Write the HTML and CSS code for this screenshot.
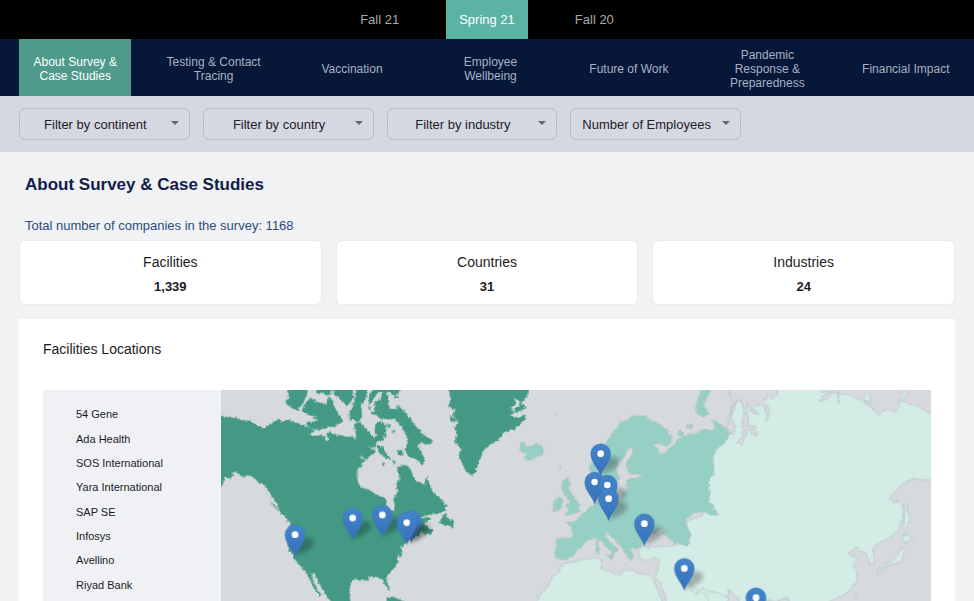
FILE: index.html
```html
<!DOCTYPE html>
<html lang="en">

<head>
    <meta charset="UTF-8">
    <meta name="viewport" content="width=device-width, initial-scale=1.0">
    <title>About Survey &amp; Case Studies</title>
    <link rel="stylesheet" href="styles.css">
</head>

<body>
    <nav class="seasons" aria-label="Survey period">
        <a href="#">Fall 21</a>
        <a href="#" class="active">Spring 21</a>
        <a href="#">Fall 20</a>
    </nav>
    <nav class="topics" aria-label="Topics">
        <a href="#" class="active">About Survey &amp; Case Studies</a>
        <a href="#">Testing &amp; Contact Tracing</a>
        <a href="#">Vaccination</a>
        <a href="#">Employee Wellbeing</a>
        <a href="#">Future of Work</a>
        <a href="#">Pandemic Response &amp; Preparedness</a>
        <a href="#">Financial Impact</a>
    </nav>
    <form class="filters">
        <div class="filter-row">
            <label class="filter"><select aria-label="Continent"><option>Filter by continent</option></select></label>
            <label class="filter"><select aria-label="Country"><option>Filter by country</option></select></label>
            <label class="filter"><select aria-label="Industry"><option>Filter by industry</option></select></label>
            <label class="filter"><select aria-label="Employees"><option>Number of Employees</option></select></label>
        </div>
    </form>

    <main>
        <h1>About Survey &amp; Case Studies</h1>
        <p class="total">Total number of companies in the survey: 1168</p>
        <div class="cards">
            <div class="card"><h2>Facilities</h2><strong>1,339</strong></div>
            <div class="card"><h2>Countries</h2><strong>31</strong></div>
            <div class="card"><h2>Industries</h2><strong>24</strong></div>
        </div>

        <section class="panel">
            <h2>Facilities Locations</h2>
            <div class="locations">
                <ul class="companies">
                    <li>54 Gene</li>
                    <li>Ada Health</li>
                    <li>SOS International</li>
                    <li>Yara International</li>
                    <li>SAP SE</li>
                    <li>Infosys</li>
                    <li>Avellino</li>
                    <li>Riyad Bank</li>
                </ul>
                <svg class="map" viewBox="0 0 2130 633" role="img" aria-label="Map of facilities">
                    <defs>
                        <linearGradient id="blue" x1="0" y1="0" x2="0" y2="1">
                            <stop offset="0" stop-color="#4585c8" />
                            <stop offset="1" stop-color="#3570bd" />
                        </linearGradient>
                        <filter id="soft" x="-50%" y="-50%" width="200%" height="200%">
                            <feGaussianBlur stdDeviation="6" />
                        </filter>
                        <!-- roughens the coastlines -->
                        <filter id="coast" filterUnits="userSpaceOnUse" x="-20" y="-20" width="2200" height="700" color-interpolation-filters="sRGB">
                            <feTurbulence type="fractalNoise" baseFrequency="0.12" numOctaves="2" seed="4" />
                            <feDisplacementMap in="SourceGraphic" scale="12" xChannelSelector="R" yChannelSelector="G" />
                        </filter>
                        <!-- the tip of the pin is at 0,0 -->
                        <g id="pin">
                            <path class="shade" d="M0 -2 L14 -42 C24 -66 58 -60 56 -40 C52 -22 22 -10 0 -2Z" />
                            <path class="drop" d="M0 0 C-5 -20 -30 -40 -30 -66 A30 30 0 0 1 30 -66 C30 -40 5 -20 0 0Z" />
                        </g>
                        <g id="marker">
                            <use href="#pin" />
                            <circle cy="-66" r="10" fill="#fff" />
                        </g>
                    </defs>

                    <g filter="url(#coast)">
                        <g class="america" transform="translate(-3 -6)">
                            <path d="M-20 76 L3 80 20 87 45 90 65 96 90 98 110 110 130 123 142 114 160 102 178 92 186 102 205 94 222 102 240 108 262 116 276 122 284 130 268 138 276 144 304 140 314 146 322 164 326 150 318 138 330 130 346 140 366 142 388 146 400 144 402 158 408 148 406 132 402 118 408 104 420 104 436 118 446 130 460 150 470 142 464 128 466 108 478 100 492 106 500 118 496 144 486 160 472 158 466 176 456 180 440 174 466 188 462 198 446 206 440 218 428 206 416 204 434 216 424 232 412 246 410 266 416 288 430 300 448 306 464 318 482 326 497 328 500 350 510 368 522 372 524 350 520 332 534 308 528 292 540 270 528 240 534 234 556 230 570 240 578 262 588 280 600 284 614 290 620 266 628 284 634 302 646 320 664 334 680 352 676 366 656 378 626 380 606 384 592 394 608 392 622 386 634 392 622 398 612 402 616 410 626 418 640 430 632 440 614 438 604 428 598 440 582 448 566 456 552 468 540 484 548 490 542 508 534 500 530 514 534 522 524 540 512 550 500 566 500 582 510 602 504 608 494 590 486 574 468 568 444 566 448 578 426 576 402 574 392 586 388 610 392 645 336 645 322 626 308 606 296 584 284 560 274 555 280 580 292 602 306 622 298 622 278 594 262 560 252 544 232 526 222 508 206 484 200 450 208 420 212 404 198 398 186 380 176 368 158 354 150 336 138 318 134 296 118 286 102 268 84 262 64 266 48 252 34 254 44 262 28 272 14 266 10 286 3 300 -20 310Z" />
                            <path d="M200 -10 L266 -10 260 24 248 46 234 68 212 58 196 46 206 26Z" />
                            <path d="M244 70 L254 48 272 28 286 40 304 44 318 50 328 24 338 38 344 58 356 78 368 96 366 106 350 108 346 118 332 116 314 122 292 128 270 120 256 106 296 96 276 90 290 86 262 80Z" />
                            <path d="M284 -10 H334 L336 14 322 24 308 12 292 20Z" />
                            <path d="M338 -10 H396 L400 26 392 44 380 54 366 38 354 28 342 18Z" />
                            <path d="M386 74 L398 60 404 36 408 -10 H442 L440 26 424 50 426 86 416 104 402 94 388 98Z" />
                            <path d="M448 20 L470 -10 H540 V10 L526 22 538 30 514 30 504 50 510 62 534 64 530 50 550 66 562 80 578 102 592 120 610 140 640 160 626 170 602 164 594 170 606 194 616 218 604 230 586 212 562 204 554 184 564 162 554 132 540 110 526 96 500 94 478 92 474 82 454 78 446 56Z" />
                            <path class="gap" d="M490 10 L478 34 464 42 464 72 454 72 448 50 474 14Z M508 40 L524 26 510 10 500 14Z" />
                            <path d="M470 170 L486 176 498 194 514 214 494 208 476 192Z M500 106 L514 112 504 122Z M486 222 L496 226 488 234Z M512 130 L526 126 524 138Z" />
                            <path d="M528 188 L546 186 552 200 534 204Z M516 216 L528 220 520 232Z M658 404 L670 380 680 376 682 388 698 398 702 420 688 412 676 414Z" />
                            <path d="M500 628 L530 630 560 645 H500Z" />
                            <path d="M682 -10 H928 L920 28 904 44 918 60 908 72 918 92 902 108 884 124 862 130 848 138 842 150 812 170 794 184 784 204 774 228 768 252 756 264 738 250 724 224 716 204 722 184 704 162 712 138 702 118 716 104 698 82 706 66 686 56 692 30Z" />
                            <path class="gap" d="M882 30 L900 40 896 58 872 66 890 74 914 62 916 76 896 90 870 82 888 68 872 58 890 50Z M174 376 L188 380 202 396 196 400Z M120 284 L134 290 150 318 170 346 178 366 160 350 142 326 134 306Z" />
                            <path d="M690 84 L710 94 702 106 690 98Z" />
                        </g>

                        <g class="asia" transform="translate(957 -6)">
                            <path d="M606 -10 L604 22 590 40 580 70 568 96 582 122 572 136 560 150 510 200 490 380 440 400 440 470 420 468 396 474 360 474 330 480 308 476 296 486 300 500 294 510 318 518 340 510 358 514 352 548 346 566 364 592 382 645 H580 L560 625 528 612 506 612 492 600 474 608 460 596 448 574 440 570 452 600 464 618 484 610 500 620 508 645 H860 L892 630 914 620 934 602 950 578 950 554 938 530 954 508 934 504 924 496 952 478 958 490 976 492 984 514 990 530 1004 526 998 490 1006 474 1022 460 1044 454 1066 436 1082 410 1092 370 1084 348 1070 338 1056 344 1050 328 1076 300 1098 280 1122 272 1150 276 1190 278 V82 L1162 72 1146 62 1132 52 1112 50 1096 42 1080 36 1080 56 1064 72 1042 64 1030 66 1016 82 1002 68 990 52 976 46 968 38 946 30 924 20 896 16 870 10 846 14 840 -10Z" />
                            <path class="gap" d="M560 -10 H716 L712 22 692 30 682 24 672 38 688 62 688 88 680 98 680 76 670 54 652 50 634 58 654 78 636 74 630 60 622 44 620 70 626 96 624 112 646 114 652 144 634 136 636 122 620 130 616 148 606 170 588 164 604 152 610 130 606 100 612 72 606 40 590 36 576 60 574 90 586 116 582 140 560 130 566 90 580 50Z" />
                            <path class="gap" d="M838 40 L852 22 878 10 864 34Z M895 8 L897 46 893 20Z M968 24 L980 18 994 48 982 50Z M710 640 L742 628 748 645Z M564 606 L592 628 600 645 H564Z" />
                            <path d="M966 24 L982 16 990 24 990 40 976 38Z M1082 12 L1096 10 1104 24 1090 26Z" />
                            <path d="M1094 346 L1102 352 1104 378 1112 396 1102 408 1102 430 1094 440 1092 410Z M1088 444 L1098 440 1120 450 1102 464 1088 466Z M1086 474 L1092 490 1086 518 1066 528 1048 530 1022 542 1018 534 1050 522 1070 504 1080 488Z M1010 542 L1022 546 1014 560Z M1028 538 L1044 532 1034 546Z M946 612 L954 616 946 630Z" />
                            <path d="M-14 645 L0 620 22 600 34 572 52 556 70 526 84 524 108 520 140 512 182 510 186 524 182 540 204 548 226 560 242 562 250 546 276 546 300 558 326 560 340 572 350 600 370 645Z" />
                        </g>

                        <g class="europe" transform="translate(957 -6)">
                            <path d="M146 244 L148 232 176 212 196 168 212 144 230 118 242 104 262 96 278 82 300 84 318 84 328 96 348 102 370 118 390 136 396 158 380 174 356 166 340 168 352 180 356 198 372 196 386 184 400 172 410 156 428 150 412 138 418 126 430 134 432 148 448 136 466 138 484 126 510 126 526 124 516 98 534 104 550 116 566 126 566 146 546 172 528 186 520 210 522 256 508 274 506 300 512 316 502 342 520 350 524 366 534 380 510 380 496 372 468 374 446 384 436 396 440 414 452 440 448 466 440 476 420 466 398 462 384 446 364 436 370 422 354 426 344 438 326 440 318 458 306 474 290 482 272 480 270 490 284 502 272 516 256 496 246 478 228 462 210 442 200 432 196 446 212 466 236 486 226 490 216 504 212 490 196 474 180 456 160 452 140 458 130 472 110 488 98 506 70 516 46 508 48 484 48 454 72 448 96 452 98 430 90 414 78 402 104 400 120 384 140 368 158 350 170 344 166 318 182 304 190 340 214 346 242 340 248 316 264 300 256 290 268 272 292 270 312 260 288 258 266 258 258 226 270 206 284 186 270 178 258 190 250 212 234 228 228 250 240 266 228 300 214 314 200 300 192 266 164 262Z" />
                            <path d="M68 276 L84 270 92 288 86 302 100 324 118 350 118 372 96 378 72 382 88 366 76 354 90 342 76 322 64 300Z M42 338 L60 324 70 338 60 366 38 370Z M478 22 L488 2 510 2 502 30 490 50 506 78 490 88 472 78 466 56Z M168 462 L176 460 174 478 180 482 176 498 168 496Z M198 500 L222 502 216 514Z M440 114 L456 108 456 120 444 122Z" />
                            <path d="M-60 164 L-50 160 -42 176 -26 174 -4 166 12 182 8 196 -16 212 -36 218 -48 208 -38 198 -58 188Z" />
                            <path d="M44 74 L50 76 46 80Z M60 228 L64 240 60 244Z" />
                        </g>
                    </g>

                    <use href="#marker" x="222" y="500" />
                    <use href="#marker" x="395" y="450" />
                    <use href="#marker" x="484" y="441" />
                    <use href="#pin" x="571" y="457" />
                    <use href="#marker" x="557" y="464" />
                    <use href="#marker" x="1139" y="257" />
                    <use href="#marker" x="1121" y="342" />
                    <use href="#marker" x="1159" y="351" />
                    <use href="#marker" x="1163" y="392" />
                    <use href="#marker" x="1270" y="467" />
                    <use href="#marker" x="1390" y="601" />
                    <use href="#marker" x="1605" y="689" />
                </svg>
            </div>
        </section>
    </main>
</body>

</html>
```

FILE: styles.css
```css
* {
    box-sizing: border-box;
    margin: 0;
    padding: 0;
}

body {
    background-color: #f0f2f4;
    color: #1c1c1e;
    font-family: "Liberation Sans", Arial, sans-serif;
    font-size: 13px;
}

a {
    text-decoration: none;
}

.seasons {
    display: flex;
    justify-content: center;
    gap: 34px;
    background-color: #000;
}

.seasons a {
    padding: 0 13px;
    line-height: 39px;
    color: #a9a9a9;
}

.seasons .active {
    background-color: #5ab3a3;
    color: #fff;
}

.topics {
    display: grid;
    grid-template-columns: repeat(7, 1fr);
    gap: 26px;
    padding: 0 12px 0 19px;
    background-color: #061737;
}

.topics a {
    display: flex;
    align-items: center;
    justify-content: center;
    min-height: 57px;
    padding: 6px 4px 4px;
    font-size: 12px;
    line-height: 14px;
    text-align: center;
    color: #a9b1c4;
}

.topics .active {
    background-color: #4e9a8b;
    color: #fff;
}

.filters {
    padding: 12px 19px;
    background-color: #d4d8e3;
}

.filter-row {
    display: grid;
    grid-template-columns: repeat(4, 1fr);
    gap: 13px;
    max-width: 722px;
}

.filter {
    position: relative;
}

.filter select {
    display: block;
    appearance: none;
    width: 100%;
    height: 32px;
    padding: 0 22px 0 4px;
    border: 1px solid #b8bdc9;
    border-radius: 6px;
    background-color: transparent;
    color: #1f2126;
    font: inherit;
    text-align: center;
    text-align-last: center;
}

.filter::after {
    content: "";
    position: absolute;
    top: 13px;
    right: 11px;
    border: 4px solid transparent;
    border-top-color: #62666e;
    border-bottom: 0;
    pointer-events: none;
}

main {
    padding: 23px 19px 0;
}

h1 {
    padding-left: 6px;
    font-size: 17px;
    line-height: 20px;
    color: #131c4b;
}

.total {
    padding: 23px 6px 6px;
    line-height: 16px;
    color: #2f4a7c;
}

.cards {
    display: grid;
    grid-template-columns: repeat(3, 1fr);
    gap: 14px;
}

.card {
    padding: 11px 0 7px;
    border: 1px solid #e9ebed;
    border-radius: 6px;
    background-color: #fff;
    text-align: center;
}

.card h2 {
    margin-bottom: 5px;
    font-size: 14px;
    font-weight: normal;
    line-height: 20px;
}

.card strong {
    display: block;
    line-height: 20px;
}

.panel {
    margin-top: 14px;
    padding: 20px 24px 0;
    background-color: #fff;
}

.panel h2 {
    font-size: 14px;
    font-weight: normal;
    line-height: 20px;
}

.locations {
    display: grid;
    grid-template-columns: 178px 1fr;
    margin-top: 31px;
}

.companies {
    display: grid;
    grid-auto-rows: 1fr;
    align-items: center;
    padding: 12px 0 4px 33px;
    background-color: #eff1f5;
    font-size: 11px;
    list-style: none;
}

.map {
    display: block;
    width: 100%;
    background-color: #d6dadd;
}

.america {
    fill: #449985;
}

.europe {
    fill: #96cfc4;
    stroke: #b4bfc0;
    stroke-width: 2;
}

.asia {
    fill: #d3ece5;
    stroke: #b4bbbd;
    stroke-width: 2;
}

.gap {
    fill: #d6dadd;
}

.drop {
    fill: url(#blue);
    stroke: #3a74b8;
    stroke-width: 1;
}

.shade {
    fill: #000;
    opacity: 0.25;
    filter: url(#soft);
}
```
